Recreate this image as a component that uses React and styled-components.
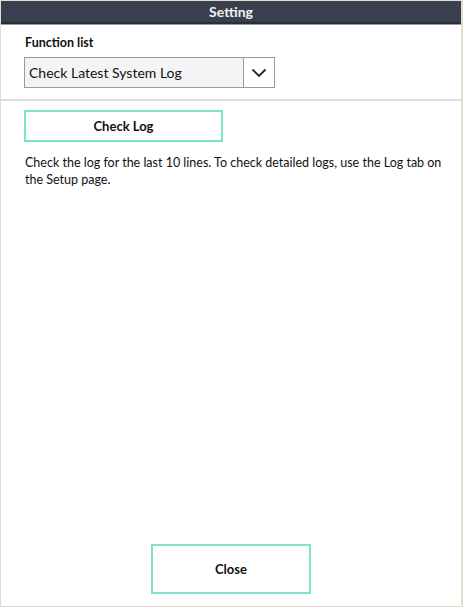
import React from "react";
import styled, { createGlobalStyle } from "styled-components";

const Global = createGlobalStyle`
  html, body { margin: 0; padding: 0; background: #ffffff; }
  body { font-family: "Lato", "Noto Sans", sans-serif; }
  #root { height: 607px; }
`;

const Frame = styled.div`
  box-sizing: border-box;
  width: 463px;
  height: 607px;
  border: 1px solid #e4ddcc;
  border-right-width: 2px;
  display: flex;
  flex-direction: column;
  background: #fff;
`;

const Header = styled.div`
  height: 21px;
  background: #3a3f4f;
  border-bottom: 2px solid #2a2e3a;
  color: #f2f2f2;
  font-weight: 700;
  font-size: 14px;
  display: flex;
  align-items: center;
  justify-content: center;
  box-shadow: 0 1px 0 #9a9ca4;
`;

const Top = styled.div`
  padding: 11px 23px 11px 23px;
  border-bottom: 2px solid #dcdcdc;
  display: flex;
  flex-direction: column;
`;

const Label = styled.div`
  font-size: 12.5px;
  font-weight: 700;
  color: #111;
  margin-bottom: 7px;
  padding-left: 1px;
`;

const Select = styled.div`
  box-sizing: border-box;
  width: 251px;
  height: 31px;
  border: 1px solid #9a9a9a;
  background: #f4f4f4;
  display: flex;
  align-items: stretch;
`;

const SelectText = styled.div`
  flex: 1;
  display: flex;
  align-items: center;
  padding-left: 4px;
  font-size: 14px;
  color: #111;
`;

const SelectArrow = styled.div`
  width: 30px;
  border-left: 1px solid #9a9a9a;
  background: #fff;
  display: flex;
  align-items: center;
  justify-content: center;
`;

const Body = styled.div`
  flex: 1;
  padding: 9px 18px 0 23px;
  display: flex;
  flex-direction: column;
`;

const Button = styled.button`
  box-sizing: border-box;
  width: ${(p) => p.$w}px;
  height: ${(p) => p.$h}px;
  background: #fff;
  border: 2px solid #7de6c9;
  font-family: inherit;
  font-weight: 700;
  font-size: 13px;
  color: #111;
  cursor: pointer;
  padding: 0;
`;

const Desc = styled.p`
  margin: 12px 0 0 1px;
  font-size: 12.5px;
  line-height: 17px;
  color: #111;
`;

const Footer = styled.div`
  display: flex;
  justify-content: center;
  padding: 0 0 12px 0;
`;

export default function App() {
  return (
    <>
      <Global />
      <Frame>
        <Header>Setting</Header>
        <Top>
          <Label>Function list</Label>
          <Select>
            <SelectText>Check Latest System Log</SelectText>
            <SelectArrow>
              <svg width="16" height="10" viewBox="0 0 16 10">
                <path d="M1.5 1.5 L8 8 L14.5 1.5" fill="none" stroke="#222" strokeWidth="1.8" />
              </svg>
            </SelectArrow>
          </Select>
        </Top>
        <Body>
          <Button $w={199} $h={32}>Check Log</Button>
          <Desc>
            Check the log for the last 10 lines. To check detailed logs, use the Log tab on the Setup page.
          </Desc>
        </Body>
        <Footer>
          <Button $w={160} $h={50}>Close</Button>
        </Footer>
      </Frame>
    </>
  );
}
